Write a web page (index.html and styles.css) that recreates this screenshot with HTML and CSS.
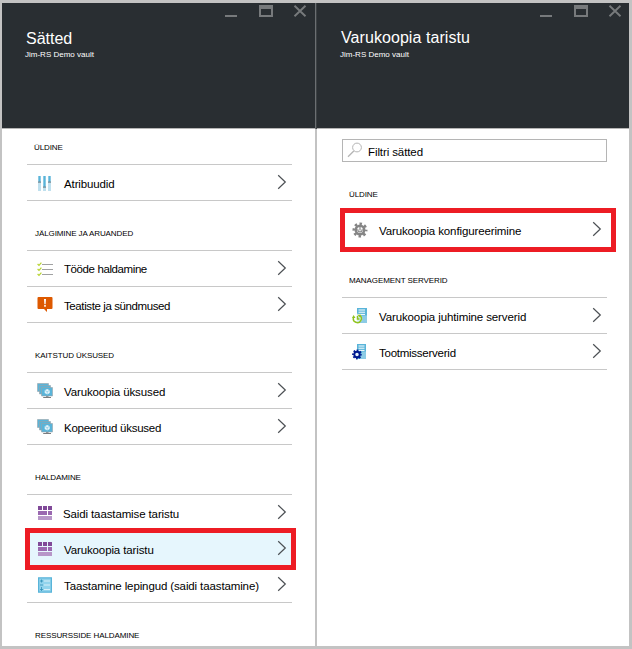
FILE: index.html
```html
<!DOCTYPE html>
<html lang="et">
<head>
<meta charset="utf-8">
<title>Sätted</title>
<link rel="stylesheet" href="styles.css">
</head>
<body>
<svg class="defs" aria-hidden="true">
  <symbol id="i-chevron" viewBox="0 0 10 16">
    <path d="M1.2 1.2 8.3 8l-7.1 6.8" fill="none" stroke="#4c5054" stroke-width="1.2"/>
  </symbol>
  <symbol id="i-sliders" viewBox="0 0 16 16">
    <path fill="#bfe0ee" d="M1 1h3v15H1zM6 1h3v15H6zM11 1h3v15h-3z"/>
    <path fill="#59b4d9" d="M1.500 1h2v6h-2zM6.500 1h2v11h-2zM11.500 1h2v6h-2z"/>
    <path fill="#7a8c96" d="M1 6.600h3v1.200H1zM6 11.600h3v1.200H6zM11 6.600h3v1.200h-3z"/>
  </symbol>
  <symbol id="i-tasks" viewBox="0 0 16 16">
    <path stroke="#a0a1a2" stroke-width="1.2" d="M5 3.500H16M5 8.500H16M5 13.500H16"/>
    <path fill="none" stroke="#b8d432" stroke-width="1.200" d="m.6 3 1.400 1.400L4.400 1.600M.6 8 2 9.400l2.400-2.800M.6 13 2 14.400l2.400-2.800"/>
  </symbol>
  <symbol id="i-alert" viewBox="0 0 16 16">
    <path fill="#dd5900" d="M1.500 0h13a1 1 0 0 1 1 1v10a1 1 0 0 1-1 1H10v3l-3-3H1.500a1 1 0 0 1-1-1V1a1 1 0 0 1 1-1z"/>
    <path fill="#fff" d="M7 2h2l-.4 5.200H7.400zM7.200 8h1.600v1.700H7.200z"/>
  </symbol>
  <symbol id="i-machines" viewBox="0 0 16 16">
    <path fill="#59b4d9" stroke="#9aa3a8" stroke-width=".6" d="M.5 .500h11v8H.5z"/>
    <path fill="#59b4d9" stroke="#9aa3a8" stroke-width=".6" d="M2.500 2.500h11v8.500h-11z"/>
    <path fill="#59b4d9" stroke="#9aa3a8" stroke-width=".6" d="M4.500 4.500h11v8.500h-11z"/>
    <path fill="#e6f5fb" d="m10.200 6 2.500 1.300v2.800l-2.500 1.400-2.500-1.400V7.300z"/>
    <path fill="none" stroke="#59b4d9" stroke-width=".5" d="m7.700 7.300 2.500 1.400 2.500-1.400M10.200 8.700v2.800"/>
    <path fill="#7a7d80" d="M9 13.300h2.500v.700H14v1.100H6.200V14H9z"/>
  </symbol>
  <symbol id="i-blocks" viewBox="0 0 16 16">
    <path fill="#804998" d="M1 1h4v4H1zM6 1h4v4H6zM11 1h4v4h-4z"/>
    <path fill="#9a68b0" d="M1 6h9v4H1zM11 6h4v4h-4z"/>
    <path fill="#b796c8" d="M1 11h14v4H1z"/>
  </symbol>
  <symbol id="i-plan" viewBox="0 0 16 16">
    <path fill="#91d3ec" stroke="#59b4d9" stroke-width="1.200" d="M1.600 .800h12.800v14.400H1.600z"/>
    <path fill="none" stroke="#308fb7" stroke-width=".8" d="M3 4h3M3 8h3M3 12.500h3M4.500 2.500v3M4.500 10v4"/>
    <path stroke="#eaf7fc" stroke-width=".8" d="M7 4h6M7 8h6M7 12.500h6"/>
  </symbol>
  <symbol id="i-gear" viewBox="0 0 16 16">
    <circle cx="8" cy="8" r="6.300" fill="none" stroke="#858585" stroke-width="2.400" stroke-dasharray="2.500 2.448" stroke-dashoffset="1.250"/>
    <circle cx="8" cy="8" r="4.200" fill="none" stroke="#858585" stroke-width="2.600"/>
    <path fill="none" stroke="#858585" stroke-width="1.200" d="M8 4v4.500M10 7.200a2.100 2.100 0 1 1-4 0"/>
  </symbol>
  <symbol id="i-server-sync" viewBox="0 0 16 16">
    <path fill="#59b4d9" d="M5 0h10v15H5z"/>
    <path fill="#8ccbe5" d="M10 7.500h5V15H8z"/>
    <path stroke="#fff" d="M6.500 2H13M6.500 4.200H13M6.500 6.400H13"/>
    <circle cx="5.500" cy="10.500" r="4.700" fill="#fff" opacity=".75"/>
    <path fill="none" stroke="#8fc31f" stroke-width="1.500" d="M1.500 9.500a4 4 0 1 0 6-2.300M5.500 8v3h2"/>
    <path fill="#8fc31f" d="m0 10 1.600-3L3.500 10zM5.300 6.700h3.500l-.7 2.800z"/>
  </symbol>
  <symbol id="i-server-gear" viewBox="0 0 16 16">
    <path fill="#59b4d9" d="M5 0h9v15H5z"/>
    <path fill="#8ccbe5" d="M10 7.500h4V15H8z"/>
    <path stroke="#fff" d="M6.500 2h6M6.500 4.200h6M6.500 6.400h6"/>
    <circle cx="5" cy="10.500" r="4" fill="none" stroke="#00188f" stroke-width="1.800" stroke-dasharray="1.700 1.441" stroke-dashoffset=".850"/>
    <circle cx="5" cy="10.500" r="2.700" fill="#e6f3fb" stroke="#00188f" stroke-width="1.900"/>
  </symbol>
  <symbol id="i-search" viewBox="0 0 16 16">
    <circle cx="10" cy="5.500" r="4.400" fill="none" stroke="#b5b5b5"/>
    <path stroke="#b5b5b5" stroke-width="1.300" d="M6.800 9 1 14.800"/>
  </symbol>
  <symbol id="i-window" viewBox="0 0 82 14">
    <path fill="#777a7c" d="M0 11h12v2H0zM34 1h14v12H34zm2 4v6h10V5z" fill-rule="evenodd"/>
    <path stroke="#777a7c" stroke-width="1.900" d="m69.500 1.700 11 10.600M80.500 1.700l-11 10.600"/>
  </symbol>
</svg>

<main class="portal">
  <section class="blade">
    <header class="blade-header edged">
      <svg class="window-controls"><use href="#i-window"/></svg>
      <h1>Sätted</h1>
      <p class="subtitle">Jim-RS Demo vault</p>
    </header>
    <div class="blade-body">
      <h2 class="first">ÜLDINE</h2>
      <ul>
        <li><svg class="icon"><use href="#i-sliders"/></svg><span>Atribuudid</span><svg class="chevron"><use href="#i-chevron"/></svg></li>
      </ul>
      <h2>JÄLGIMINE JA ARUANDED</h2>
      <ul>
        <li><svg class="icon"><use href="#i-tasks"/></svg><span class="tight raised">Tööde haldamine</span><svg class="chevron"><use href="#i-chevron"/></svg></li>
        <li><svg class="icon"><use href="#i-alert"/></svg><span class="tight">Teatiste ja sündmused</span><svg class="chevron"><use href="#i-chevron"/></svg></li>
      </ul>
      <h2>KAITSTUD ÜKSUSED</h2>
      <ul>
        <li><svg class="icon"><use href="#i-machines"/></svg><span>Varukoopia üksused</span><svg class="chevron"><use href="#i-chevron"/></svg></li>
        <li><svg class="icon"><use href="#i-machines"/></svg><span class="snug">Kopeeritud üksused</span><svg class="chevron"><use href="#i-chevron"/></svg></li>
      </ul>
      <h2>HALDAMINE</h2>
      <ul>
        <li><svg class="icon"><use href="#i-blocks"/></svg><span class="outdent">Saidi taastamise taristu</span><svg class="chevron"><use href="#i-chevron"/></svg></li>
        <li class="selected marked"><svg class="icon"><use href="#i-blocks"/></svg><span>Varukoopia taristu</span><svg class="chevron"><use href="#i-chevron"/></svg></li>
        <li><svg class="icon"><use href="#i-plan"/></svg><span>Taastamine lepingud (saidi taastamine)</span><svg class="chevron"><use href="#i-chevron"/></svg></li>
      </ul>
      <h2>RESSURSSIDE HALDAMINE</h2>
    </div>
  </section>

  <section class="blade detail">
    <header class="blade-header">
      <svg class="window-controls"><use href="#i-window"/></svg>
      <h1>Varukoopia taristu</h1>
      <p class="subtitle">Jim-RS Demo vault</p>
    </header>
    <div class="blade-body">
      <div class="search"><svg><use href="#i-search"/></svg><span>Filtri sätted</span></div>
      <h2>ÜLDINE</h2>
      <ul>
        <li class="marked marked-wide"><svg class="icon"><use href="#i-gear"/></svg><span>Varukoopia konfigureerimine</span><svg class="chevron"><use href="#i-chevron"/></svg></li>
      </ul>
      <h2>MANAGEMENT SERVERID</h2>
      <ul>
        <li><svg class="icon"><use href="#i-server-sync"/></svg><span>Varukoopia juhtimine serverid</span><svg class="chevron"><use href="#i-chevron"/></svg></li>
        <li><svg class="icon"><use href="#i-server-gear"/></svg><span class="snug">Tootmisserverid</span><svg class="chevron"><use href="#i-chevron"/></svg></li>
      </ul>
    </div>
  </section>
</main>
</body>
</html>
```
FILE: styles.css
```css
* { box-sizing: border-box; }

body {
  margin: 0;
  background: #c3c3c3;
  color: #000;
  font-family: "Liberation Sans", Arial, sans-serif;
}

h1, h2, p, ul { margin: 0; padding: 0; font-weight: 400; }

.defs { display: none; }

.portal {
  display: grid;
  grid-template-columns: 313px 312px;
  grid-template-rows: 643px;
  column-gap: 2px;
  width: 632px;
  height: 649px;
  padding: 3px 3px 3px 2px;
  overflow: hidden;
}

.blade {
  display: flex;
  flex-direction: column;
  min-height: 0;
  background: #fff;
}

.blade-header {
  display: flex;
  flex-direction: column;
  flex: none;
  height: 126px;
  padding: 1px 8px 0 24px;
  background: #292e32;
  border-bottom: 1px solid #b5b5b5;
  color: #fff;
}

.edged { box-shadow: 1px 0 #6b6f72, 2px 0 #3c4144; }

.detail .blade-header { padding-right: 7px; }

.window-controls {
  align-self: flex-end;
  width: 82px;
  height: 14px;
}

h1 {
  margin-top: 12px;
  font-size: 16px;
  line-height: 18px;
}

.detail h1 {
  margin-top: 11px;
  margin-bottom: 1px;
  letter-spacing: .07px;
}

.subtitle {
  margin: 2px 0 0 -1px;
  font-size: 8px;
  line-height: 10px;
}

.blade-body {
  display: flex;
  flex-direction: column;
  flex: none;
  padding: 0 23px 0 25px;
}

h2 {
  display: flex;
  align-items: flex-end;
  height: 49px;
  padding: 0 0 11px 8px;
  font-size: 8px;
  line-height: 10px;
  letter-spacing: -.09px;
}

h2.first { height: 35px; }

h2.first, .detail h2 { padding-left: 7px; }

ul {
  width: 265px;
  border-bottom: 1px solid #c8c8c8;
  list-style: none;
}

li {
  position: relative;
  display: flex;
  align-items: center;
  height: 36px;
  padding: 0 5px 0 10px;
  border-top: 1px solid #c8c8c8;
  font-size: 11.5px;
  line-height: 14px;
  letter-spacing: -.12px;
}

li span { flex: 1; padding-top: 3px; white-space: nowrap; }

li span.raised { padding-top: 1px; }

li span.outdent { margin-left: -1px; }

.tight { letter-spacing: -.4px; }

.snug { letter-spacing: -.25px; }

.icon { width: 16px; height: 16px; margin-right: 11px; }

.chevron { width: 10px; height: 16px; margin-top: -1px; }

.selected { background: #e6f6fd; }

.marked::after {
  content: "";
  position: absolute;
  inset: -3px -4px -4px -2px;
  border: 5px solid #ed1c24;
  z-index: 1;
}

.marked-wide::after { inset: -4px -9px -5px -2px; }

.search {
  display: flex;
  align-items: center;
  width: 265px;
  height: 23px;
  margin-top: 10px;
  padding-left: 4px;
  border: 1px solid #b5b5b5;
  font-size: 11.5px;
  line-height: 14px;
  letter-spacing: -.1px;
}

.search svg { width: 16px; height: 16px; margin: -2px 5px 0 0; }

.search span { padding-top: 2px; }
```
